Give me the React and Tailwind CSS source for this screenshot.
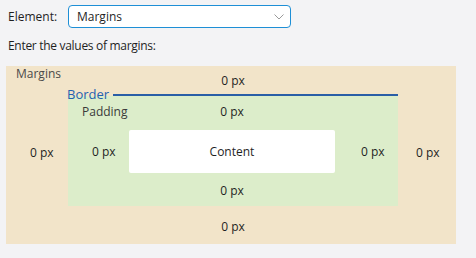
import React from "react";

const font = { fontFamily: '"Open Sans", "Noto Sans", "Liberation Sans", sans-serif' };

export default function App() {
  return (
    <div className="w-[476px] h-[258px] bg-[#f3f3f5] text-[12px] text-[#1f1f1f] overflow-hidden" style={font}>
      <div className="flex items-center h-[33px] pt-[5px] pb-[5px]">
        <div className="w-[68px] pl-[8px]">Element:</div>
        <div className="w-[223px] h-[23px] border border-[#1e8fd6] rounded-[4px] bg-white flex items-center pl-[8px] pr-[6px]">
          <span className="flex-1">Margins</span>
          <svg width="10" height="6" viewBox="0 0 10 6" fill="none" stroke="#9a9a9a" strokeWidth="1">
            <path d="M0.5 0.5 L5 5 L9.5 0.5" />
          </svg>
        </div>
      </div>
      <div className="h-[33px] pl-[8px] pt-[5px] leading-[16px] tracking-[-0.3px]">Enter the values of margins:</div>
      <div className="ml-[6px] w-[450px] h-[178px] bg-[#f2e4c9] flex flex-col leading-[16px]">
        <div className="flex h-[27px]">
          <div className="w-[62px] pl-[10px] text-[#4a4a4a]">Margins</div>
          <div className="w-[330px] text-center pt-[7px]">0 px</div>
        </div>
        <div className="flex h-[113px]">
          <div className="w-[62px] pl-[24px] flex items-center pt-[6px]">0 px</div>
          <div className="w-[330px] flex flex-col">
            <div className="flex items-center h-[3px]">
              <span className="relative z-10 text-[13px] leading-none text-[#1f62b0] pr-[4px] -ml-px">Border</span>
              <div className="flex-1 h-[2px] bg-[#2a5ea6]" />
            </div>
            <div className="flex-1 bg-[#dcedca] flex flex-col">
              <div className="flex h-[34px] pt-[8px]">
                <div className="w-[61px] pl-[14px] text-[#3a3a3a]">Padding</div>
                <div className="w-[206px] text-center">0 px</div>
              </div>
              <div className="flex h-[43px]">
                <div className="w-[61px] pl-[24px] flex items-center">0 px</div>
                <div className="w-[206px] bg-white flex items-center justify-center rounded-[2px]">Content</div>
                <div className="w-[63px] pl-[26px] flex items-center">0 px</div>
              </div>
              <div className="flex pt-[10px]">
                <div className="w-[61px]" />
                <div className="w-[206px] text-center">0 px</div>
              </div>
            </div>
          </div>
          <div className="w-[58px] pl-[18px] flex items-center pt-[6px]">0 px</div>
        </div>
        <div className="flex pt-[13px]">
          <div className="w-[62px]" />
          <div className="w-[330px] text-center">0 px</div>
        </div>
      </div>
    </div>
  );
}
